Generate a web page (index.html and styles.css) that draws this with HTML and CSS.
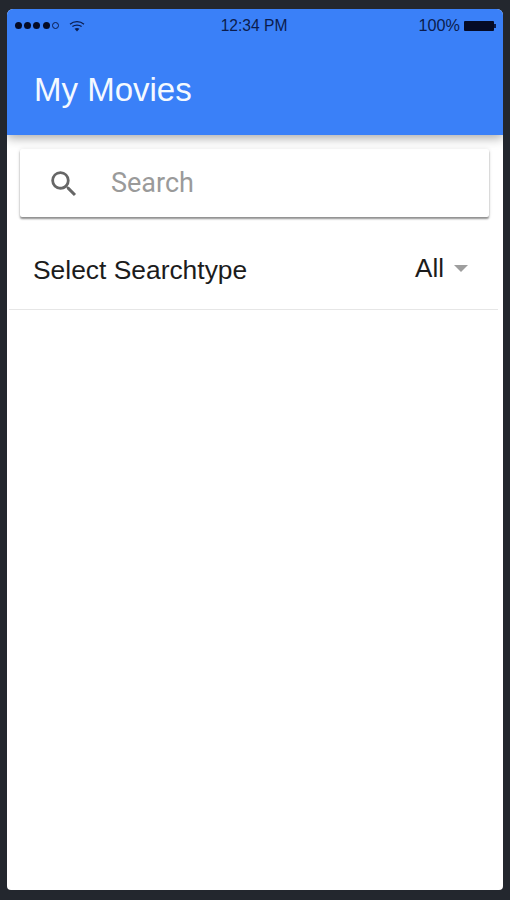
FILE: index.html
```html
<!DOCTYPE html>
<html lang="en">
<head>
<meta charset="utf-8">
<title>My Movies</title>
<link rel="stylesheet" href="styles.css">
</head>
<body>
<main class="screen">
  <header class="appbar">
    <div class="status">
      <div class="status-left">
        <span class="signal">
          <i class="dot"></i><i class="dot"></i><i class="dot"></i><i class="dot"></i><i class="dot dot-empty"></i>
        </span>
        <svg class="wifi" width="16" height="12" viewBox="0 0 16 12" aria-hidden="true">
          <path d="M1 4.2C5 .8 11 .8 15 4.2" fill="none" stroke="#0b1c4d" stroke-width="1.3"/>
          <path d="M3.4 6.6C6 4.5 10 4.5 12.6 6.6" fill="none" stroke="#0b1c4d" stroke-width="1.3"/>
          <path d="M5.6 8.8C7 7.7 9 7.7 10.4 8.8L8 11.4Z" fill="#0b1c4d"/>
        </svg>
      </div>
      <span class="clock">12:34 PM</span>
      <div class="status-right">
        <span class="percent">100%</span>
        <span class="battery"><i class="battery-cap"></i></span>
      </div>
    </div>
    <h1 class="title">My Movies</h1>
  </header>
  <section class="content">
    <div class="searchbar">
      <svg class="search-icon" width="34" height="34" viewBox="0 0 24 24" aria-hidden="true">
        <path d="M15.5 14h-.79l-.28-.27A6.47 6.47 0 0 0 16 9.5 6.5 6.5 0 1 0 9.5 16c1.61 0 3.09-.59 4.23-1.57l.27.28v.79l5 4.99L20.49 19l-4.99-5zm-6 0C7.01 14 5 11.99 5 9.5S7.01 5 9.5 5 14 7.01 14 9.5 11.99 14 9.5 14z" fill="#666"/>
      </svg>
      <span class="search-placeholder">Search</span>
    </div>
    <div class="select-row">
      <span class="select-label">Select Searchtype</span>
      <span class="select-value">All<i class="caret"></i></span>
    </div>
  </section>
</main>
</body>
</html>
```
FILE: styles.css
```css
* { box-sizing: border-box; }
html, body { height: 100%; }
body {
  margin: 0;
  padding: 9px 7px 10px 7px;
  background: #23272e;
  font-family: "Liberation Sans", Arial, sans-serif;
}
.screen {
  height: 881px;
  background: #fff;
  border-radius: 6px 6px 4px 4px;
  overflow: hidden;
  display: flex;
  flex-direction: column;
}
.appbar {
  height: 126px;
  flex: none;
  background: #3a80f8;
  position: relative;
  box-shadow: 0 3px 10px rgba(0, 0, 0, 0.34);
}
.status {
  height: 32px;
  padding: 1px 9px 0 8px;
  display: flex;
  align-items: center;
  justify-content: space-between;
  color: #0b1c4d;
}
.status-left { display: flex; align-items: center; gap: 10px; width: 140px; }
.signal { display: flex; gap: 2.2px; }
.dot { width: 7px; height: 7px; border-radius: 50%; background: #050a25; }
.dot-empty { background: none; border: 1px solid #0b1c4d; }
.wifi { display: block; }
.clock { font-size: 15.6px; margin-right: 1px; }
.status-right { display: flex; align-items: center; gap: 4px; width: 140px; justify-content: flex-end; }
.percent { font-size: 16.2px; }
.battery {
  width: 30px;
  height: 10px;
  background: #050a25;
  border-radius: 1px;
  position: relative;
}
.battery-cap {
  position: absolute;
  right: -2px;
  top: 3px;
  width: 2px;
  height: 4px;
  background: #0b1c4d;
}
.title {
  margin: 31px 0 0 27px;
  font-size: 33px;
  line-height: 36px;
  font-weight: 400;
  color: #f4f9ff;
}
.content {
  flex: 1;
  padding: 14px 14px 0 13px;
}
.searchbar {
  height: 68px;
  background: #fff;
  border-radius: 2px;
  box-shadow: 0 2px 2px rgba(0, 0, 0, 0.42), 0 0 4px rgba(0, 0, 0, 0.1);
  display: flex;
  align-items: center;
  padding-left: 27px;
}
.search-icon { flex: none; margin-top: 1px; }
.search-placeholder {
  margin-left: 30px;
  font-family: Roboto, "Liberation Sans", sans-serif;
  font-size: 27px;
  color: #9a9a9a;
}
.select-row {
  margin: 0 -9px 0 -11px;
  height: 93px;
  padding: 14px 30px 0 24px;
  border-bottom: 1px solid #e6e6e6;
  display: flex;
  align-items: center;
  justify-content: space-between;
  color: #1c1c1c;
  font-size: 26.4px;
}
.select-value { display: flex; align-items: center; margin-top: -4px; font-size: 26px; }
.caret {
  width: 0;
  height: 0;
  margin-left: 10px;
  border-left: 7.5px solid transparent;
  border-right: 7.5px solid transparent;
  border-top: 7.5px solid #9e9e9e;
}
```
